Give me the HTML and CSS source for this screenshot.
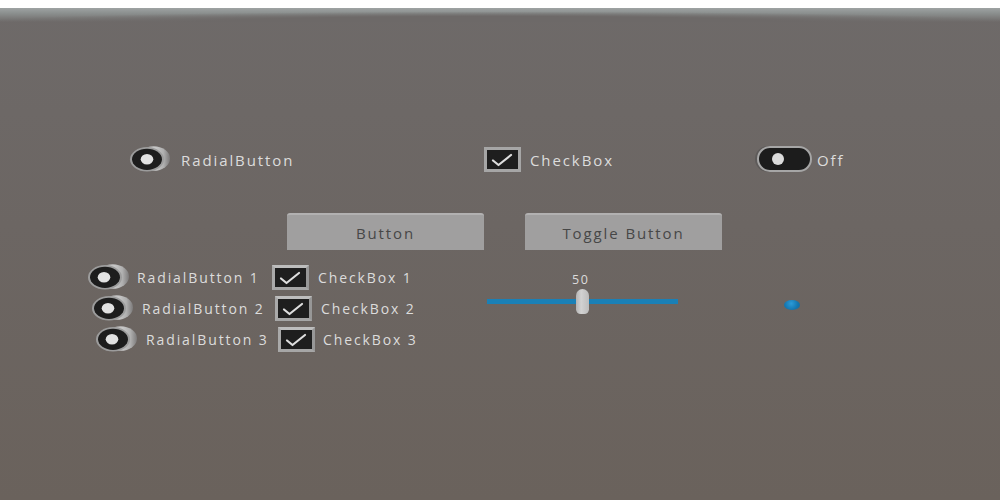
FILE: index.html
```html
<!DOCTYPE html>
<html>
<head>
<meta charset="utf-8">
<link rel="stylesheet" href="styles.css">
</head>
<body>
<div class="scene">
  <div class="sky"></div>
  <div class="horizon"></div>
  <div class="stage">
    <div class="top-row">
      <div class="item">
        <svg class="radio" viewBox="0 0 42 26" width="42" height="26">
          <defs>
            <linearGradient id="cyl" x1="0" x2="1" y1="0" y2="0">
              <stop offset="0" stop-color="#8a8888"/>
              <stop offset="0.55" stop-color="#c8c8c8"/>
              <stop offset="0.8" stop-color="#b0b0b0"/>
              <stop offset="1" stop-color="#7c7a7a"/>
            </linearGradient>
          </defs>
          <ellipse cx="24.5" cy="12.5" rx="16.5" ry="12.3" fill="url(#cyl)"/>
          <ellipse cx="18" cy="13.3" rx="17" ry="12.2" fill="#9c9c9c"/>
          <ellipse cx="18" cy="13.3" rx="15" ry="10.6" fill="#1d1d1d"/>
          <ellipse cx="18" cy="13.3" rx="6.3" ry="5.3" fill="#e2e2e2"/>
        </svg>
        <span class="label">RadialButton</span>
      </div>
      <div class="item">
        <span class="check">
          <svg viewBox="0 0 31 19" width="31" height="19"><path d="M6 10.5 L11.5 15 L24 5" fill="none" stroke="#dedede" stroke-width="2.2" stroke-linecap="round" stroke-linejoin="round"/></svg>
        </span>
        <span class="label">CheckBox</span>
      </div>
      <div class="item">
        <span class="toggle"><span class="knob"></span></span>
        <span class="label off">Off</span>
      </div>
    </div>

    <div class="btn-row">
      <div class="btn">Button</div>
      <div class="btn">Toggle Button</div>
    </div>

    <div class="bottom">
      <div class="list">
        <div class="row r1">
          <svg class="radio" viewBox="0 0 42 26" width="42" height="26">
            <ellipse cx="24.5" cy="12.5" rx="16.5" ry="12.3" fill="url(#cyl)"/>
            <ellipse cx="17" cy="13.3" rx="17" ry="12.2" fill="#9c9c9c"/>
            <ellipse cx="17" cy="13.3" rx="15" ry="10.6" fill="#1d1d1d"/>
            <ellipse cx="16" cy="13.3" rx="6.3" ry="5.3" fill="#e2e2e2"/>
          </svg>
          <span class="label sm">RadialButton 1</span>
          <span class="check box3d">
            <svg viewBox="0 0 31 19" width="31" height="19"><path d="M6 10.5 L11.5 15 L24 5" fill="none" stroke="#dedede" stroke-width="2.2" stroke-linecap="round" stroke-linejoin="round"/></svg>
          </span>
          <span class="label sm">CheckBox 1</span>
        </div>
        <div class="row r2">
          <svg class="radio" viewBox="0 0 42 26" width="42" height="26">
            <ellipse cx="24.5" cy="12.5" rx="16.5" ry="12.3" fill="url(#cyl)"/>
            <ellipse cx="17" cy="13.3" rx="17" ry="12.2" fill="#9c9c9c"/>
            <ellipse cx="17" cy="13.3" rx="15" ry="10.6" fill="#1d1d1d"/>
            <ellipse cx="16" cy="13.3" rx="6.3" ry="5.3" fill="#e2e2e2"/>
          </svg>
          <span class="label sm">RadialButton 2</span>
          <span class="check box3d">
            <svg viewBox="0 0 31 19" width="31" height="19"><path d="M6 10.5 L11.5 15 L24 5" fill="none" stroke="#dedede" stroke-width="2.2" stroke-linecap="round" stroke-linejoin="round"/></svg>
          </span>
          <span class="label sm">CheckBox 2</span>
        </div>
        <div class="row r3">
          <svg class="radio" viewBox="0 0 42 26" width="42" height="26">
            <ellipse cx="24.5" cy="12.5" rx="16.5" ry="12.3" fill="url(#cyl)"/>
            <ellipse cx="17" cy="13.3" rx="17" ry="12.2" fill="#9c9c9c"/>
            <ellipse cx="17" cy="13.3" rx="15" ry="10.6" fill="#1d1d1d"/>
            <ellipse cx="16" cy="13.3" rx="6.3" ry="5.3" fill="#e2e2e2"/>
          </svg>
          <span class="label sm">RadialButton 3</span>
          <span class="check box3d">
            <svg viewBox="0 0 31 19" width="31" height="19"><path d="M6 10.5 L11.5 15 L24 5" fill="none" stroke="#dedede" stroke-width="2.2" stroke-linecap="round" stroke-linejoin="round"/></svg>
          </span>
          <span class="label sm">CheckBox 3</span>
        </div>
      </div>

      <div class="slider">
        <div class="value">50</div>
        <div class="track">
          <span class="thumb"></span>
        </div>
      </div>

      <div class="dot"></div>
    </div>
  </div>
</div>
</body>
</html>
```
FILE: styles.css
```css
html, body {
  margin: 0;
  padding: 0;
}
body {
  font-family: "Open Sans", "Noto Sans", sans-serif;
  background: #6b635d;
}
.scene {
  width: 1000px;
  height: 500px;
  overflow: hidden;
  display: flex;
  flex-direction: column;
  background: linear-gradient(#6e6a69 0%, #6c6663 45%, #6a625c 100%);
}
.sky {
  height: 8px;
  background: #ffffff;
}
.horizon {
  height: 14px;
  background:
    radial-gradient(ellipse 70% 100% at 50% 100%, rgba(109,105,104,1) 40%, rgba(109,105,104,0) 75%),
    linear-gradient(#9ea3a3 0%, #8a8e8d 40%, #6e6a69 100%);
}
.stage {
  flex: 1;
  display: flex;
  flex-direction: column;
}

/* top row */
.top-row {
  margin-top: 124px;
  padding-left: 129px;
  display: grid;
  grid-template-columns: 355px 273px auto;
  align-items: center;
  height: 26px;
}
.item {
  display: flex;
  align-items: center;
}
.label {
  color: #dcdcdc;
  font-size: 15px;
  letter-spacing: 1.9px;
  line-height: 1;
  padding-top: 2px;
}
.item .label {
  margin-left: 10px;
}
.radio {
  display: block;
  flex: none;
}
.check {
  flex: none;
  width: 31px;
  height: 19px;
  border: 3px solid #a6a6a6;
  background: #1e1e1e;
  display: flex;
  align-items: center;
  justify-content: center;
}
.check svg {
  display: block;
}
.top-row .check + .label {
  margin-left: 9px;
}
.toggle {
  flex: none;
  height: 22px;
  width: 38px;
  border: 2px solid #a6a6a6;
  border-radius: 13px;
  background: #1c1c1c;
  box-shadow: -2px 0 0 #5d5a59;
  display: flex;
  align-items: center;
  padding-left: 13px;
}
.knob {
  width: 12px;
  height: 12px;
  border-radius: 50%;
  background: #dcdcdc;
}
.label.off {
  margin-left: 5px;
}

/* buttons */
.btn-row {
  margin-top: 41px;
  padding-left: 287px;
  display: flex;
  gap: 41px;
}
.btn {
  width: 197px;
  height: 37px;
  background: #a09f9f;
  border-top: 2px solid #b2b1b1;
  border-radius: 3px 3px 0 0;
  box-sizing: border-box;
  color: #474747;
  font-size: 15px;
  letter-spacing: 1.9px;
  display: flex;
  align-items: center;
  justify-content: center;
  padding-top: 1px;
}

/* bottom */
.bottom {
  margin-top: 14px;
  display: flex;
  align-items: flex-start;
}
.list {
  width: 487px;
  display: flex;
  flex-direction: column;
  gap: 6px;
}
.row {
  display: grid;
  align-items: center;
  height: 25px;
}
.r1 { padding-left: 88px; grid-template-columns: 49px 135px 46px auto; }
.r2 { padding-left: 92px; grid-template-columns: 50px 133px 46px auto; }
.r3 { padding-left: 96px; grid-template-columns: 50px 132px 45px auto; }
.label.sm {
  font-size: 14px;
  letter-spacing: 1.9px;
  padding-top: 1px;
}
.box3d {
  border-top-color: #bdbdbd;
  border-right-color: #979797;
  border-left-color: #aaaaaa;
}
.slider {
  width: 191px;
  margin-top: 10px;
  display: flex;
  flex-direction: column;
}
.value {
  color: #dcdcdc;
  font-size: 12.5px;
  letter-spacing: 1.5px;
  padding-left: 85px;
  line-height: 12px;
}
.track {
  margin-top: 13px;
  height: 5px;
  background: #1a80b6;
  display: flex;
  padding-left: 89px;
}
.thumb {
  width: 13px;
  height: 25px;
  margin-top: -10px;
  border-radius: 7px 7px 5px 5px;
  background: linear-gradient(90deg, #b4b4b4, #d2d2d2 40%, #bcbcbc);
}
.dot {
  margin-left: 106px;
  margin-top: 36px;
  width: 16px;
  height: 10px;
  border-radius: 50%;
  background: radial-gradient(circle at 45% 35%, #2b9bd8 0%, #1476b0 60%, #0f6aa0 100%);
}
```
